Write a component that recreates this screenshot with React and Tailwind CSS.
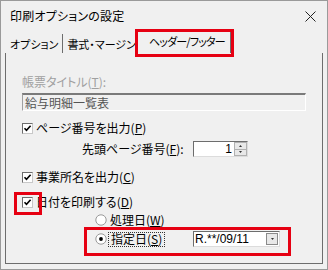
import React from "react";

const Check = ({ checked = true }) => (
  <div className="w-[11px] h-[11px] shrink-0 bg-white border border-t-[#6d6d6d] border-l-[#6d6d6d] border-r-[#c8c8c8] border-b-[#c8c8c8] flex items-center justify-center">
    {checked && (
      <svg width="9" height="9" viewBox="0 0 9 9">
        <path d="M1.5 4.2 L3.5 6.4 L7.6 1.8" stroke="#000" strokeWidth="1.6" fill="none" />
      </svg>
    )}
  </div>
);

const Radio = ({ checked }) => (
  <svg width="12" height="12" viewBox="0 0 12 12" className="shrink-0">
    <circle cx="6" cy="6" r="5.2" fill="#fff" stroke="#9a9a9a" strokeWidth="1" />
    {checked && <circle cx="6" cy="6" r="1.9" fill="#000" />}
  </svg>
);

const U = ({ children }) => <span className="underline underline-offset-[1px]">{children}</span>;

export default function App() {
  return (
    <div className="relative w-[328px] h-[270px] bg-[#f0f0f0] border border-[#9a9a9a] font-['Noto_Sans_CJK_JP',sans-serif] [font-feature-settings:'palt'] text-[12px] leading-[14px] text-black overflow-hidden">
      {/* title bar */}
      <div className="h-[30px] flex items-center justify-between pl-[9px] pr-[11px]">
        <span className="text-[12px] tracking-[0.2px]">印刷オプションの設定</span>
        <svg width="11" height="11" viewBox="0 0 11 11">
          <path d="M0.5 0.5 L10.5 10.5 M10.5 0.5 L0.5 10.5" stroke="#222" strokeWidth="1" />
        </svg>
      </div>

      {/* tabs */}
      <div className="h-[22px] flex items-end pl-[4px] text-[11px]">
        <div className="h-[19px] flex items-center pl-[5px] pr-[4px] border-r border-[#6d6d6d]">オプション</div>
        <div className="h-[19px] flex items-center pl-[4px] pr-[2px]">書式・マージン</div>
        <div className="h-[21px] flex items-start pt-[2px] pl-[11px] pr-[5px] border-r border-[#6d6d6d] whitespace-nowrap tracking-[-0.8px]">ヘッダー/フッター</div>
      </div>

      {/* panel */}
      <div className="mx-[4px] h-[211px] border-l border-r border-b border-[#6d6d6d] pl-[16px] pr-[16px] pt-[22px] flex flex-col">
        <div className="text-[#a0a0a0] h-[14px]">帳票タイトル(<U>T</U>):</div>
        <div className="mt-[4px] h-[18px] border-t-2 border-t-[#7a7a7a] border-l border-l-[#a0a0a0] border-b border-b-white border-r border-r-white flex items-center pl-[2px] text-[#555]">
          給与明細一覧表
        </div>

        <div className="mt-[10px] h-[14px] flex items-center gap-[3px]">
          <Check />
          <span>ページ番号を出力(<U>P</U>)</span>
        </div>

        <div className="mt-[6px] h-[16px] flex items-center pl-[60px]">
          <span className="w-[111px]">先頭ページ番号(<U>F</U>):</span>
          <div className="w-[55px] h-[16px] bg-white border border-t-[#6d6d6d] border-l-[#6d6d6d] border-r-[#dcdcdc] border-b-[#dcdcdc] flex items-center">
            <span className="flex-1 text-right pr-[2px] font-['Liberation_Sans',sans-serif] text-[12px]">1</span>
            <div className="w-[13px] h-[14px] flex flex-col">
              <div className="flex-1 bg-[#e8e8e8] border border-[#b0b0b0] flex items-center justify-center">
                <svg width="3" height="2" viewBox="0 0 3 2"><path d="M0 2 L1.5 0 L3 2Z" fill="#333" /></svg>
              </div>
              <div className="flex-1 bg-[#e8e8e8] border border-t-0 border-[#b0b0b0] flex items-center justify-center">
                <svg width="3" height="2" viewBox="0 0 3 2"><path d="M0 0 L1.5 2 L3 0Z" fill="#333" /></svg>
              </div>
            </div>
          </div>
        </div>

        <div className="mt-[13px] h-[14px] flex items-center gap-[3px]">
          <Check />
          <span>事業所名を出力(<U>C</U>)</span>
        </div>

        <div className="mt-[11px] h-[14px] flex items-center gap-[3px]">
          <Check />
          <span>日付を印刷する(<U>D</U>)</span>
        </div>

        <div className="mt-[4px] h-[14px] flex items-center pl-[73px] gap-[3px]">
          <Radio />
          <span>処理日(<U>W</U>)</span>
        </div>

        <div className="mt-[4px] h-[16px] flex items-center pl-[73px]">
          <div className="w-[98px] flex items-center">
            <Radio checked />
            <span className="ml-[1px] px-[2px] border border-dotted border-[#333] h-[15px] flex items-center">
              指定日(<U>S</U>)
            </span>
          </div>
          <div className="w-[87px] h-[16px] bg-white border border-t-[#6d6d6d] border-l-[#6d6d6d] border-r-[#dcdcdc] border-b-[#dcdcdc] flex items-center">
            <span className="flex-1 pl-[1px] font-['Liberation_Sans',sans-serif] text-[12px] leading-[14px]">R.**/09/11</span>
            <div className="w-[12px] h-[12px] mr-[1px] bg-[#e8e8e8] border border-[#8a8a8a] flex items-center justify-center">
              <svg width="3" height="2" viewBox="0 0 3 2"><path d="M0 0 L1.5 2 L3 0Z" fill="#333" /></svg>
            </div>
          </div>
        </div>
      </div>

      {/* red annotation boxes */}
      <div className="absolute left-[134px] top-[28px] w-[99px] h-[28px] border-[3px] border-[#e60012]" />
      <div className="absolute left-[13px] top-[191px] w-[28px] h-[23px] border-[3px] border-[#e60012]" />
      <div className="absolute left-[83px] top-[226px] w-[207px] h-[29px] border-[3px] border-[#e60012]" />
    </div>
  );
}
